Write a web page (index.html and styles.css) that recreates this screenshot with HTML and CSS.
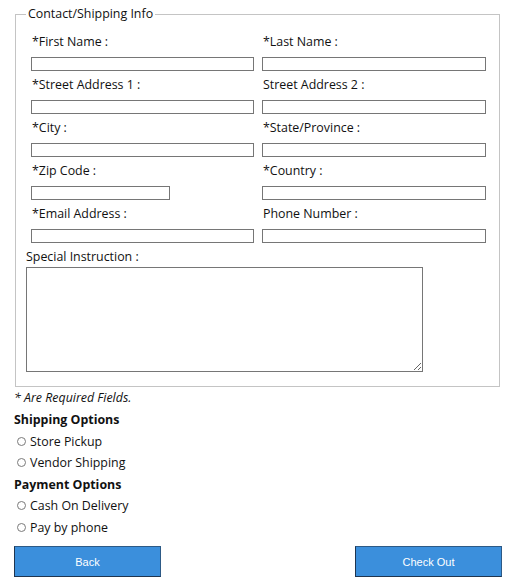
FILE: index.html
```html
<!DOCTYPE html>
<html>
<head>
<meta charset="utf-8">
<link rel="stylesheet" href="styles.css">
</head>
<body>
<div class="page">
  <fieldset class="box">
    <legend class="legend">Contact/Shipping Info</legend>
    <div class="grid">
      <div class="field"><label class="lbl">*First Name :</label><input class="inp" type="text"></div>
      <div class="field"><label class="lbl">*Last Name :</label><input class="inp" type="text"></div>
      <div class="field"><label class="lbl">*Street Address 1 :</label><input class="inp" type="text"></div>
      <div class="field"><label class="lbl">Street Address 2 :</label><input class="inp" type="text"></div>
      <div class="field"><label class="lbl">*City :</label><input class="inp" type="text"></div>
      <div class="field"><label class="lbl">*State/Province :</label><input class="inp" type="text"></div>
      <div class="field"><label class="lbl">*Zip Code :</label><input class="inp short" type="text"></div>
      <div class="field"><label class="lbl">*Country :</label><input class="inp" type="text"></div>
      <div class="field"><label class="lbl">*Email Address :</label><input class="inp" type="text"></div>
      <div class="field"><label class="lbl">Phone Number :</label><input class="inp" type="text"></div>
    </div>
    <label class="lbl special">Special Instruction :</label>
    <textarea class="area"></textarea>
  </fieldset>
  <div class="note">* Are Required Fields.</div>
  <div class="head">Shipping Options</div>
  <label class="opt"><input class="radio" type="radio" name="ship">Store Pickup</label>
  <label class="opt"><input class="radio" type="radio" name="ship">Vendor Shipping</label>
  <div class="head">Payment Options</div>
  <label class="opt"><input class="radio" type="radio" name="pay">Cash On Delivery</label>
  <label class="opt"><input class="radio" type="radio" name="pay">Pay by phone</label>
  <div class="actions">
    <button class="btn" type="button">Back</button>
    <button class="btn" type="button">Check Out</button>
  </div>
</div>
</body>
</html>
```
FILE: styles.css
```css
html, body {
  margin: 0;
  padding: 0;
  background: #fff;
}
body {
  font-family: "Open Sans", "Noto Sans", sans-serif;
  font-size: 12.4px;
  color: #111;
}
.page {
  width: 488px;
  padding: 5px 0 0 14px;
}
.box {
  margin: 0 2px 0 1px;
  padding: 9px 0 14px 10px;
  border: 1px solid #c4c4c4;
  min-width: 0;
}
.legend {
  padding: 0 2px;
  margin-left: 0;
  line-height: 18px;
  font-size: 12.4px;
}
.grid {
  display: grid;
  grid-template-columns: 223px 224px;
  column-gap: 8px;
  margin-left: 5px;
}
.field {
  display: flex;
  flex-direction: column;
  align-items: flex-start;
  margin-bottom: 4px;
}
.lbl {
  display: block;
  line-height: 18px;
  height: 18px;
  margin: 1px 0 6px 1px;
}
.inp {
  box-sizing: border-box;
  width: 100%;
  height: 14px;
  margin: 0;
  padding: 0;
  border: 1px solid #767676;
  background: #fff;
}
.inp.short {
  width: 139px;
}
.special {
  margin: 1px 0 1px 0;
}
.area {
  display: block;
  box-sizing: border-box;
  width: 397px;
  height: 105px;
  margin: 0;
  border: 1px solid #767676;
  padding: 2px;
  font-family: inherit;
}
.note {
  font-style: italic;
  line-height: 22px;
}
.head {
  font-weight: 700;
  line-height: 21.5px;
}
.opt {
  display: flex;
  align-items: center;
  line-height: 21.5px;
  height: 21.5px;
}
.radio {
  appearance: none;
  -webkit-appearance: none;
  box-sizing: border-box;
  width: 9px;
  height: 9px;
  margin: 0 4px 0 3px;
  border: 1px solid #7a7a7a;
  border-radius: 50%;
  background: #fff;
}
.actions {
  display: flex;
  justify-content: space-between;
  margin-top: 8px;
}
.btn {
  box-sizing: border-box;
  width: 147px;
  height: 31px;
  margin: 0;
  background: #3b8fdc;
  border: 1px solid #1f3550;
  border-top-color: #2d5a86;
  border-right-color: #2d5a86;
  color: #fff;
  font-family: "Liberation Sans", Arial, sans-serif;
  font-size: 11px;
}
```
